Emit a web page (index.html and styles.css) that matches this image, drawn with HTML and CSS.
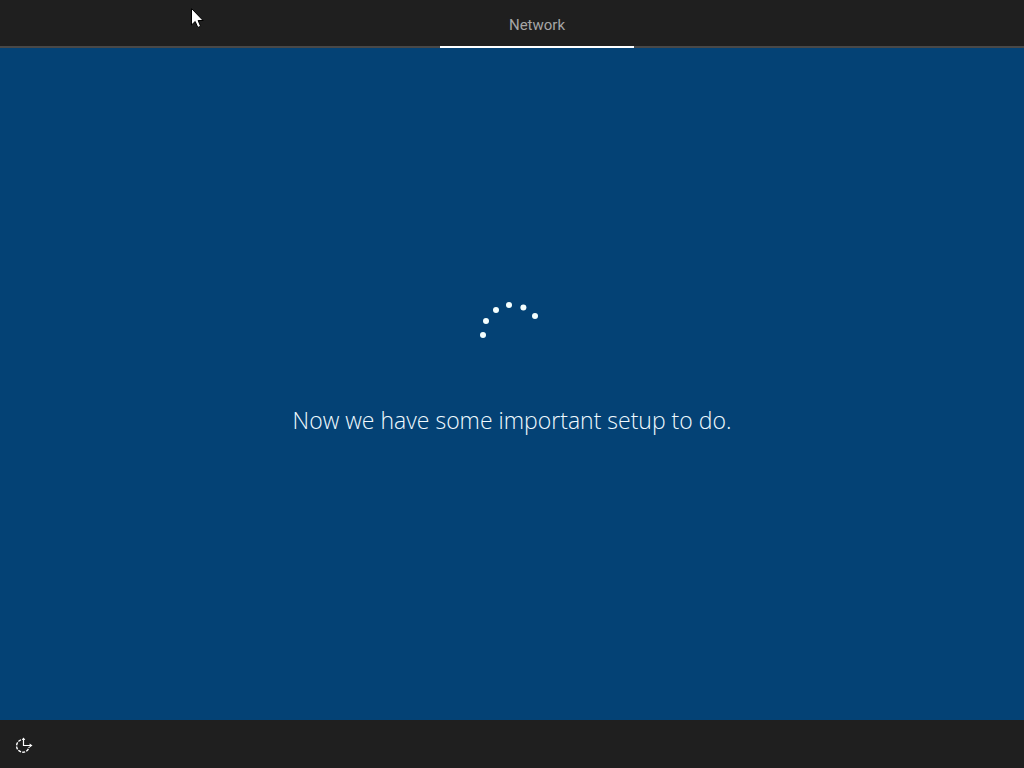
FILE: index.html
```html
<!DOCTYPE html>
<html lang="en">
<head>
  <meta charset="UTF-8">
  <meta name="viewport" content="width=device-width, initial-scale=1">
  <title>Network setup</title>
  <link rel="stylesheet" href="styles.css">
</head>
<body>

  <header class="topbar">
    <div class="tab">Network</div>
  </header>

  <main class="content">
    <svg class="spinner" viewBox="0 0 60 60" role="img" aria-label="Loading">
      <circle cx="1" cy="31" r="3"/>
      <circle cx="4" cy="17" r="3"/>
      <circle cx="14" cy="6" r="3"/>
      <circle cx="27" cy="1" r="3"/>
      <circle cx="41.4" cy="3.5" r="3"/>
      <circle cx="53" cy="12" r="3"/>
    </svg>
    <p class="message">Now we have some important setup to do.</p>
  </main>

  <footer class="bottombar">
    <button class="access" type="button" aria-label="Ease of Access">
      <svg viewBox="0 0 18 18">
        <path class="ring" d="M6 3.9A6.3 6.3 0 1 0 14.1 11"/>
        <path class="hands" d="M8.5 2v7.5H16"/>
        <path class="tips" d="M6.7 4L8.5 1.6 10.3 4zM14.6 7.5L17.5 9.5l-2.9 2z"/>
      </svg>
    </button>
  </footer>

  <svg class="cursor" viewBox="0 0 14 22" aria-hidden="true">
    <path d="M.5.5v16.5l3.7-3.5 2.6 6 2.8-1.2-2.5-5.8h5z"/>
  </svg>

</body>
</html>
```

FILE: styles.css
```css
* {
  box-sizing: border-box;
}
body {
  display: flex;
  flex-direction: column;
  min-height: 100vh;
  margin: 0;
  background-color: #044275;
  color: #fff;
  font-family: "Segoe UI", "Open Sans", sans-serif;
}
.topbar {
  display: flex;
  justify-content: center;
  height: 48px;
  padding-left: 50px;
  background-color: #1f1f1f;
  box-shadow: inset 0 -2px #484848;
}
.tab {
  width: 194px;
  border-bottom: 2px solid #fff;
  color: #a6a6a6;
  font-family: "Segoe UI", Roboto, sans-serif;
  font-size: 15px;
  line-height: 50px;
  text-align: center;
}
.content {
  display: flex;
  flex: 1;
  flex-direction: column;
  align-items: center;
  justify-content: center;
  gap: 40px;
  padding-bottom: 28px;
}
.spinner {
  width: 60px;
  height: 60px;
  overflow: visible;
  fill: #f4ffff;
}
.message {
  margin: 0;
  color: #f0faff;
  font-size: 23px;
  font-weight: 300;
  line-height: 32px;
  text-align: center;
}
.bottombar {
  display: flex;
  align-items: center;
  height: 48px;
  padding: 2px 15px 0;
  background-color: #1f1f1f;
}
.access {
  display: flex;
  padding: 0;
  border: none;
  background: none;
  cursor: pointer;
}
.access svg {
  width: 18px;
  height: 18px;
}
.ring {
  fill: none;
  stroke: #fff;
  stroke-width: 1.4;
  stroke-dasharray: 3 1.2;
}
.hands {
  fill: none;
  stroke: #fff;
  stroke-width: 1.2;
}
.tips {
  fill: #fff;
}
.cursor {
  position: absolute;
  top: 8px;
  left: 191px;
  width: 14px;
  height: 22px;
  fill: #fff;
  stroke: #000;
  pointer-events: none;
}
```
